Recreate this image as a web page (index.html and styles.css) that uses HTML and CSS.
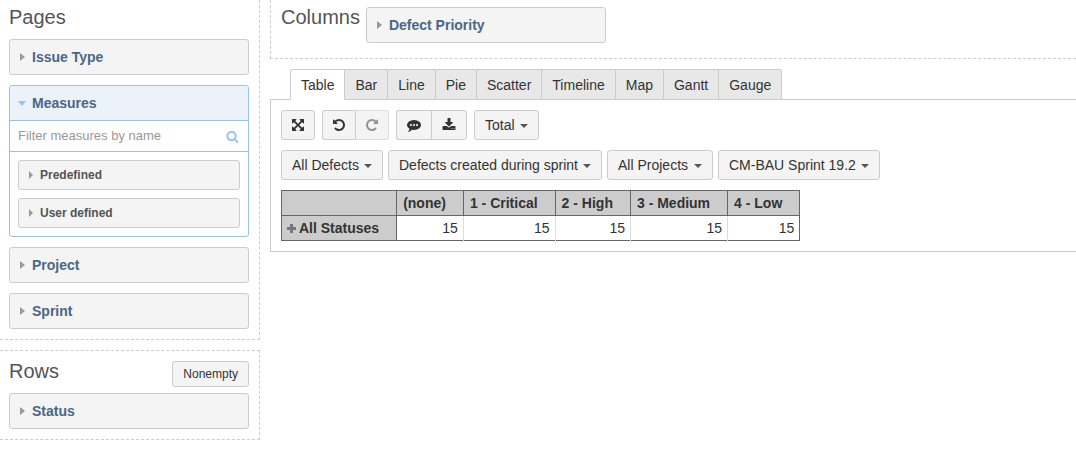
FILE: index.html
```
<!DOCTYPE html>
<html lang="en">
<head>
  <meta charset="UTF-8">
  <title>Defect report</title>
  <link rel="stylesheet" href="styles.css">
</head>
<body>
  <aside class="sidebar">
    <section class="panel pages">
      <h2>Pages</h2>
      <button class="dimension">Issue Type</button>
      <div class="measures">
        <button class="dimension open">Measures</button>
        <div class="filter">
          <input type="search" placeholder="Filter measures by name" aria-label="Filter measures by name">
          <svg class="search" width="13" height="13" viewBox="0 0 1792 1792">
            <path d="M1216 832q0-185-131.500-316.500t-316.500-131.500-316.500 131.500-131.500 316.500 131.500 316.500 316.500 131.500 316.500-131.500 131.500-316.500zm512 832q0 52-38 90t-90 38q-54 0-90-38l-343-342q-179 124-399 124-143 0-273.500-55.500t-225-150-150-225-55.500-273.500 55.500-273.500 150-225 225-150 273.500-55.500 273.500 55.500 225 150 150 225 55.500 273.500q0 220-124 399l343 343q37 37 37 90z"/>
          </svg>
        </div>
        <div class="measure-list">
          <button class="dimension small">Predefined</button>
          <button class="dimension small">User defined</button>
        </div>
      </div>
      <button class="dimension">Project</button>
      <button class="dimension">Sprint</button>
    </section>

    <section class="panel rows">
      <div class="rows-head">
        <h2>Rows</h2>
        <button class="nonempty">Nonempty</button>
      </div>
      <button class="dimension">Status</button>
    </section>
  </aside>

  <main class="main">
    <section class="columns">
      <h2>Columns</h2>
      <button class="dimension">Defect Priority</button>
    </section>

    <nav class="tabs">
      <a href="#table" class="active">Table</a>
      <a href="#bar">Bar</a>
      <a href="#line">Line</a>
      <a href="#pie">Pie</a>
      <a href="#scatter">Scatter</a>
      <a href="#timeline">Timeline</a>
      <a href="#map">Map</a>
      <a href="#gantt">Gantt</a>
      <a href="#gauge">Gauge</a>
    </nav>

    <section class="report" id="table">
      <div class="toolbar">
        <button class="btn" aria-label="Maximize">
          <svg width="14" height="14" viewBox="0 0 1792 1792">
            <path d="M1411 541l-355 355 355 355 144-144q29-31 70-14 39 17 39 59v448q0 26-19 45t-45 19h-448q-42 0-59-40-17-39 14-69l144-144-355-355-355 355 144 144q31 30 14 69-17 40-59 40h-448q-26 0-45-19t-19-45v-448q0-42 40-59 39-17 69 14l144 144 355-355-355-355-144 144q-19 19-45 19-12 0-24-5-40-17-40-59v-448q0-26 19-45t45-19h448q42 0 59 40 17 39-14 69l-144 144 355 355 355-355-144-144q-31-30-14-69 17-40 59-40h448q26 0 45 19t19 45v448q0 42-39 59-13 5-25 5-26 0-45-19z"/>
          </svg>
        </button>
        <div class="group">
          <button class="btn" aria-label="Undo">
            <svg width="12" height="14" viewBox="128 0 1536 1792">
              <path d="M1664 896q0 156-61 298t-164 245-245 164-298 61q-172 0-327-72.500t-264-204.500q-7-10-6.500-22.500t8.500-20.500l137-138q10-9 25-9 16 2 23 12 73 95 179 147t225 52q104 0 198.500-40.500t163.500-109.500 109.500-163.500 40.500-198.500-40.500-198.500-109.500-163.500-163.500-109.500-198.500-40.500q-98 0-188 35.500t-160 101.500l137 138q31 30 14 69-17 40-59 40h-448q-26 0-45-19t-19-45v-448q0-42 40-59 39-17 69 14l130 129q107-101 244.500-156.500t284.500-55.500q156 0 298 61t245 164 164 245 61 298z"/>
            </svg>
          </button>
          <button class="btn" aria-label="Redo" disabled>
            <svg width="12" height="14" viewBox="128 0 1536 1792">
              <path transform="translate(1792 0) scale(-1 1)" d="M1664 896q0 156-61 298t-164 245-245 164-298 61q-172 0-327-72.500t-264-204.500q-7-10-6.500-22.500t8.500-20.500l137-138q10-9 25-9 16 2 23 12 73 95 179 147t225 52q104 0 198.500-40.500t163.500-109.500 109.500-163.500 40.500-198.500-40.500-198.500-109.500-163.500-163.500-109.500-198.500-40.500q-98 0-188 35.500t-160 101.500l137 138q31 30 14 69-17 40-59 40h-448q-26 0-45-19t-19-45v-448q0-42 40-59 39-17 69 14l130 129q107-101 244.500-156.500t284.500-55.500q156 0 298 61t245 164 164 245 61 298z"/>
            </svg>
          </button>
        </div>
        <div class="group">
          <button class="btn" aria-label="Comment">
            <svg width="14" height="14" viewBox="0 0 1792 1792">
              <path d="M640 896q0-53-37.500-90.500t-90.500-37.500-90.500 37.500-37.500 90.500 37.500 90.500 90.500 37.500 90.500-37.500 37.500-90.500zm384 0q0-53-37.500-90.500t-90.500-37.500-90.500 37.500-37.500 90.500 37.500 90.500 90.500 37.500 90.500-37.500 37.500-90.500zm384 0q0-53-37.500-90.500t-90.500-37.500-90.500 37.500-37.500 90.500 37.500 90.500 90.500 37.500 90.500-37.500 37.500-90.500zm384 0q0 174-120 321.500t-326 233-450 85.500q-110 0-211-18-173 173-435 229-52 10-86 13-12 1-22-6t-13-18q-4-15 20-37 5-5 23.500-21.500t25.500-23.500 23.500-25.500 24-31.500 20.500-37 20-48 14.500-57.500 12.500-72.500q-146-90-229.500-216.500t-83.500-269.500q0-174 120-321.500t326-233 450-85.500 450 85.500 326 233 120 321.500z"/>
            </svg>
          </button>
          <button class="btn" aria-label="Export">
            <svg width="14" height="14" viewBox="0 0 1792 1792">
              <path d="M1344 1344q0-26-19-45t-45-19-45 19-19 45 19 45 45 19 45-19 19-45zm256 0q0-26-19-45t-45-19-45 19-19 45 19 45 45 19 45-19 19-45zm128-224v320q0 40-28 68t-68 28h-1472q-40 0-68-28t-28-68v-320q0-40 28-68t68-28h465l135 136q58 56 136 56t136-56l136-136h464q40 0 68 28t28 68zm-325-569q17 41-14 70l-448 448q-18 19-45 19t-45-19l-448-448q-31-29-14-70 17-39 59-39h256v-448q0-26 19-45t45-19h256q26 0 45 19t19 45v448h256q42 0 59 39z"/>
            </svg>
          </button>
        </div>
        <div class="select">
          <select aria-label="Total"><option>Total</option></select>
        </div>
      </div>

      <div class="page-filters">
        <div class="select">
          <select aria-label="Issue type"><option>All Defects</option></select>
        </div>
        <div class="select">
          <select aria-label="Measure"><option>Defects created during sprint</option></select>
        </div>
        <div class="select">
          <select aria-label="Project"><option>All Projects</option></select>
        </div>
        <div class="select">
          <select aria-label="Sprint"><option>CM-BAU Sprint 19.2</option></select>
        </div>
      </div>

      <table class="results">
        <thead>
          <tr>
            <td></td>
            <th scope="col">(none)</th>
            <th scope="col">1 - Critical</th>
            <th scope="col">2 - High</th>
            <th scope="col">3 - Medium</th>
            <th scope="col">4 - Low</th>
          </tr>
        </thead>
        <tbody>
          <tr>
            <th scope="row">
              <svg class="plus" width="9" height="9" viewBox="0 0 9 9"><path d="M3 0h3v3h3v3H6v3H3V6H0V3h3z"/></svg>All Statuses
            </th>
            <td>15</td>
            <td>15</td>
            <td>15</td>
            <td>15</td>
            <td>15</td>
          </tr>
        </tbody>
      </table>
    </section>
  </main>
</body>
</html>
```
FILE: styles.css
```
* {
  box-sizing: border-box;
}
body {
  margin: 0;
  display: flex;
  align-items: flex-start;
  gap: 10px;
  font-family: "Liberation Sans", Arial, sans-serif;
  font-size: 14px;
  line-height: 20px;
  color: #333;
  background: #fff;
}
button, input, select {
  font: inherit;
  color: inherit;
}
button, select {
  cursor: pointer;
}
h2 {
  margin: 0;
  font-size: 20px;
  font-weight: normal;
  line-height: 24px;
  color: #555;
}

/* sidebar */
.sidebar {
  flex: 0 0 260px;
  display: flex;
  flex-direction: column;
  gap: 10px;
}
.panel {
  display: flex;
  flex-direction: column;
  gap: 10px;
  padding: 5px 10px 10px 9px;
  border: 1px dashed #ccc;
  border-left: none;
}
.pages {
  border-top: none;
}
.rows {
  gap: 6px;
  padding-top: 10px;
}
.rows-head {
  display: flex;
  justify-content: space-between;
  align-items: flex-start;
}
.rows-head h2 {
  line-height: 20px;
}
.nonempty {
  padding: 2px 10px;
  font-size: 12px;
  border: 1px solid #ccc;
  border-radius: 3px;
  background: #f4f4f4;
}
.dimension {
  display: flex;
  align-items: center;
  gap: 7px;
  width: 100%;
  padding: 7px 10px;
  border: 1px solid #ccc;
  border-radius: 3px;
  background: #f4f4f4;
  color: #4a6785;
  font-weight: bold;
  text-align: left;
}
.dimension::before {
  content: "";
  border: 4px solid transparent;
  border-left: 5px solid #999;
  border-right: none;
}
.measures {
  border: 1px solid #9cbfe4;
  border-radius: 3px;
}
.dimension.open {
  gap: 6px;
  padding: 7px 8px;
  border: none;
  border-bottom: 1px solid #9cbfe4;
  border-radius: 2px 2px 0 0;
  background: #ebf2f9;
}
.dimension.open::before {
  border: 4px solid transparent;
  border-top: 5px solid #9cbfe4;
  border-bottom: none;
}
.filter {
  display: flex;
  align-items: center;
  padding: 5px 9px 5px 8px;
  border-bottom: 1px solid #9cbfe4;
}
.filter input {
  flex: 1;
  min-width: 0;
  height: 20px;
  padding: 0;
  border: none;
  outline: none;
  background: none;
  font-size: 13px;
}
.filter input::placeholder {
  color: #999;
  opacity: 1;
}
.search {
  fill: #9cbfe4;
}
.measure-list {
  display: flex;
  flex-direction: column;
  gap: 8px;
  padding: 8px;
}
.dimension.small {
  padding: 4px 10px;
  color: #555;
  font-size: 12px;
}
.dimension.small::before {
  border-left-width: 4px;
}

/* report */
.main {
  flex: 1;
  min-width: 0;
}
.columns {
  display: flex;
  gap: 6px;
  padding: 5px 10px 15px;
  border: 1px dashed #ccc;
  border-top: none;
  border-right: none;
}
.columns .dimension {
  width: 240px;
  margin-top: 2px;
}
.tabs {
  display: flex;
  padding-left: 20px;
  margin-top: 10px;
  margin-bottom: -1px;
}
.tabs a {
  position: relative;
  padding: 5px 10px 4px;
  border: 1px solid #ccc;
  border-left: none;
  background: #e8e8e8;
  color: #333;
  text-decoration: none;
}
.tabs a.active {
  border-left: 1px solid #ccc;
  border-bottom-color: #fff;
  border-radius: 3px 0 0 0;
  background: #fff;
}
.tabs a:last-child {
  border-radius: 0 3px 0 0;
}
.report {
  padding: 10px;
  border: 1px solid #ccc;
  border-right: none;
}
.toolbar {
  display: flex;
  gap: 7px;
  margin-bottom: 10px;
}
.btn {
  display: flex;
  align-items: center;
  justify-content: center;
  height: 30px;
  padding: 0 9px;
  border: 1px solid #ccc;
  border-radius: 3px;
  background: #f4f4f4;
}
.btn svg {
  fill: #333;
}
.btn:disabled {
  border-color: #ddd;
}
.btn:disabled svg {
  opacity: 0.5;
}
.group {
  display: flex;
}
.group .btn {
  padding: 0 10px;
}
.group .btn:first-child {
  border-right: none;
  border-radius: 3px 0 0 3px;
}
.group .btn:last-child {
  border-left-color: #ccc;
  border-radius: 0 3px 3px 0;
}
.page-filters {
  display: flex;
  flex-wrap: wrap;
  gap: 5px;
  margin-bottom: 10px;
}
.select {
  position: relative;
}
.select select {
  appearance: none;
  height: 30px;
  padding: 0 23px 0 10px;
  border: 1px solid #ccc;
  border-radius: 3px;
  background: #f4f4f4;
}
.select::after {
  content: "";
  position: absolute;
  top: 14px;
  right: 11px;
  border: 4px solid transparent;
  border-top-color: #555;
  border-bottom: none;
  pointer-events: none;
}
.results {
  border-collapse: collapse;
  border: 1px solid #666;
}
.results th, .results thead td {
  height: 25px;
  padding: 2px 17px 2px 6px;
  border: 1px solid #666;
  background: #ccc;
  text-align: left;
}
.results tbody th {
  padding-left: 5px;
}
.results tbody td {
  padding: 2px 5px;
  border-right: 1px solid #ddd;
  text-align: right;
}
.results tbody td:last-child {
  border-right-color: #666;
}
.plus {
  margin-right: 3px;
  fill: #777;
}
```
